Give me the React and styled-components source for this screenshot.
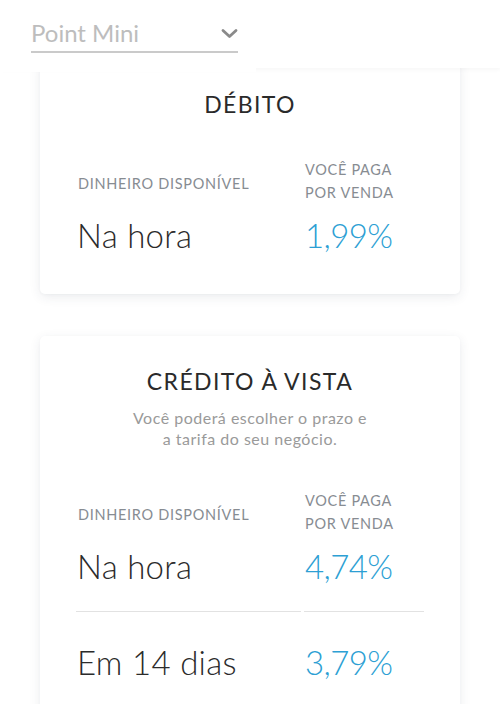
import React from "react";
import styled, { createGlobalStyle } from "styled-components";

const Global = createGlobalStyle`
  html, body { margin: 0; padding: 0; background: #fff; }
  body { font-family: Lato, "Open Sans", sans-serif; color: #333; overflow: hidden; }
`;

const Page = styled.div`
  width: 500px;
  min-height: 704px;
  background: #fff;
`;

const HeaderBar = styled.header`
  position: relative;
  z-index: 2;
  height: 68px;
  background: #fff;
  box-shadow: 0 2px 4px rgba(0, 0, 0, 0.035);
`;

const SelectBox = styled.div`
  width: 256px;
  height: 72px;
  background: #fff;
  padding: 14px 0 0 31px;
  box-sizing: border-box;
`;

const Select = styled.div`
  width: 207px;
  height: 39px;
  box-sizing: border-box;
  border-bottom: 2px solid #cacaca;
  display: flex;
  align-items: center;
  justify-content: space-between;
`;

const SelectText = styled.span`
  font-size: 24px;
  font-weight: 400;
  color: #bdbdbd;
  line-height: 30px;
  margin-top: 1px;
`;

const Chevron = styled.svg`
  width: 17px;
  height: 11px;
  margin-right: 0;
  margin-top: 1px;
`;

const CardList = styled.main`
  display: flex;
  flex-direction: column;
  gap: 42px;
  padding: 0 40px 80px;
  margin-top: -9px;
`;

const Card = styled.section`
  background: #fff;
  border-radius: 5px;
  box-shadow: 0 3px 12px rgba(40, 50, 80, 0.09), 0 1px 3px rgba(40, 50, 80, 0.03);
  padding: 31px 36px 39px 36px;
`;

const Title = styled.h2`
  margin: 0;
  text-align: center;
  font-size: 23px;
  line-height: 28px;
  font-weight: 400;
  letter-spacing: 1.4px;
  color: #2a2a2a;
`;

const Subtitle = styled.p`
  margin: 13px 0 0;
  text-align: center;
  font-size: 16px;
  line-height: 20.5px;
  color: #9a9a9a;
  letter-spacing: 0.5px;
`;

const Table = styled.div`
  margin-top: 40px;
  display: grid;
  grid-template-columns: 225px 120px;
  column-gap: 3px;
`;

const Label = styled.div`
  display: flex;
  align-items: center;
  font-size: 14.5px;
  line-height: 23px;
  color: #878c92;
  letter-spacing: 0.7px;
  padding-left: ${(p) => (p.$right ? "1px" : "2px")};
  padding-bottom: 11px;
  padding-top: ${(p) => (p.$right ? "0" : "4px")};
`;

const Value = styled.div`
  font-size: 33px;
  line-height: 40px;
  font-weight: 300;
  color: ${(p) => (p.$accent ? "#2d9fd4" : "#2b2b2b")};
  letter-spacing: ${(p) => (p.$accent ? "-0.6px" : "0.3px")};
  padding-left: 1px;
  padding-top: ${(p) => (p.$first ? "0" : "30px")};
  padding-bottom: ${(p) => (p.$last ? "0" : "25px")};
  border-bottom: ${(p) => (p.$last ? "none" : "1px solid #e2e2e2")};
`;

function RateCard({ title, subtitle, rows }) {
  return (
    <Card>
      <Title>{title}</Title>
      {subtitle && (
        <Subtitle>
          {subtitle[0]}
          <br />
          {subtitle[1]}
        </Subtitle>
      )}
      <Table>
        <Label>DINHEIRO DISPONÍVEL</Label>
        <Label $right>
          VOCÊ PAGA
          <br />
          POR VENDA
        </Label>
        {rows.map((r, i) => (
          <React.Fragment key={i}>
            <Value $first={i === 0} $last={i === rows.length - 1}>
              {r[0]}
            </Value>
            <Value $accent $first={i === 0} $last={i === rows.length - 1}>
              {r[1]}
            </Value>
          </React.Fragment>
        ))}
      </Table>
    </Card>
  );
}

export default function App() {
  return (
    <Page>
      <Global />
      <HeaderBar>
        <SelectBox>
          <Select>
            <SelectText>Point Mini</SelectText>
            <Chevron viewBox="0 0 17 11">
              <path d="M2 2.5 L8.5 8.5 L15 2.5" fill="none" stroke="#8a8a8a" strokeWidth="2.8" strokeLinecap="round" strokeLinejoin="round" />
            </Chevron>
          </Select>
        </SelectBox>
      </HeaderBar>
      <CardList>
        <RateCard title="DÉBITO" rows={[["Na hora", "1,99%"]]} />
        <RateCard
          title="CRÉDITO À VISTA"
          subtitle={["Você poderá escolher o prazo e", "a tarifa do seu negócio."]}
          rows={[
            ["Na hora", "4,74%"],
            ["Em 14 dias", "3,79%"],
          ]}
        />
      </CardList>
    </Page>
  );
}
